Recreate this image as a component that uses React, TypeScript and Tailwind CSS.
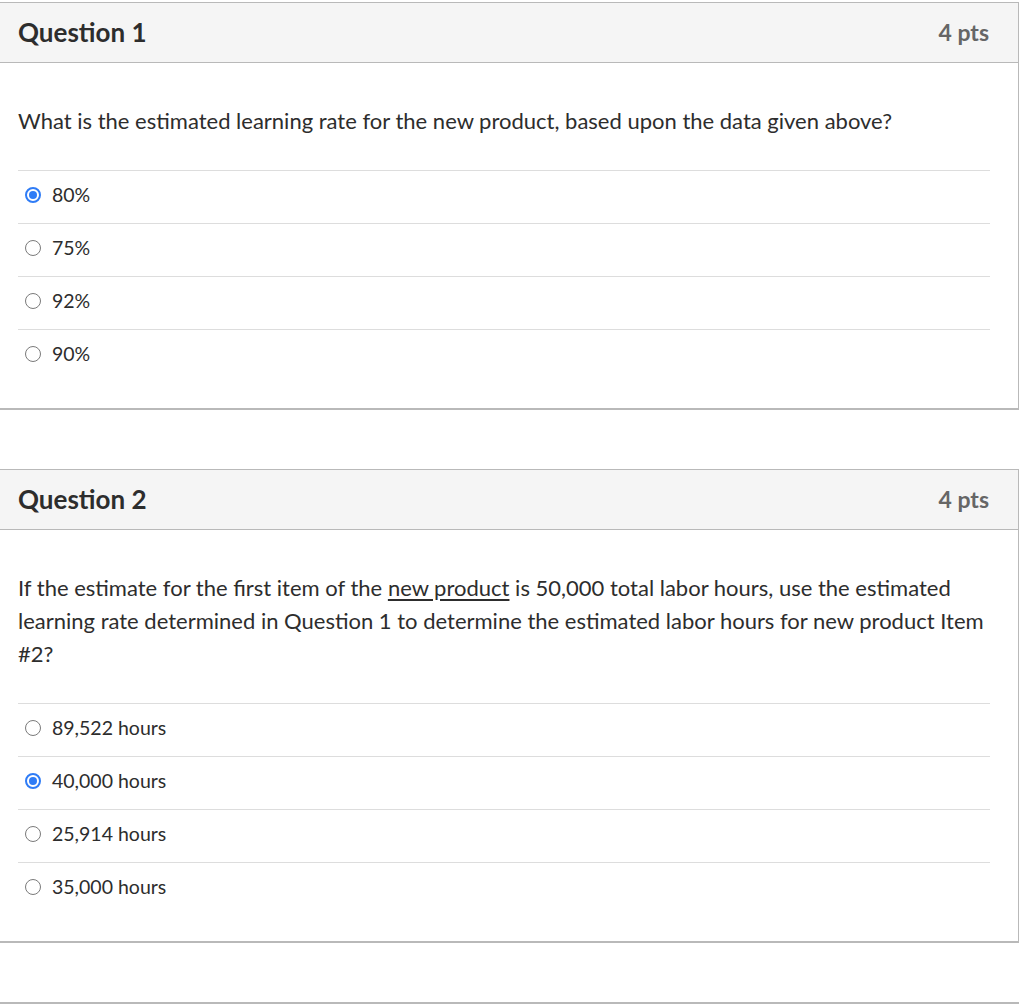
import React from 'react';

type Answer = { label: string; checked?: boolean };

function Radio({ checked }: { checked?: boolean }) {
  if (checked) {
    return (
      <span className="flex h-[16px] w-[16px] items-center justify-center rounded-full border-[2px] border-[#2f7cf6] bg-white">
        <span className="h-[8px] w-[8px] rounded-full bg-[#2f7cf6]" />
      </span>
    );
  }
  return <span className="h-[16px] w-[16px] rounded-full border border-[#7a7a7a] bg-white" />;
}

function QuestionCard({
  title,
  points,
  children,
  answers,
}: {
  title: string;
  points: string;
  children: React.ReactNode;
  answers: Answer[];
}) {
  return (
    <div className="w-[1019px] border border-l-0 border-[#b9b9b9] border-b-2 bg-white">
      <div className="flex h-[60px] items-center justify-between border-b border-[#b9b9b9] bg-[#f5f5f5] pl-[18px] pr-[29px]">
        <h2 className="text-[26px] font-bold text-[#2d2d2d]">{title}</h2>
        <span className="text-[23px] font-bold text-[#666666]">{points}</span>
      </div>
      <div className="pl-[18px] pr-[28px] pt-[41px] pb-[26px]">
        <div className="text-[22px] leading-[33px] text-[#2d2d2d]">{children}</div>
        <div className="mt-[33px]">
          {answers.map((a) => (
            <div key={a.label} className="flex h-[53px] items-center border-t border-[#dddddd] pb-[4px] pl-[7px]">
              <span className="flex w-[27px] items-center">
                <Radio checked={a.checked} />
              </span>
              <span className="text-[19.5px] text-[#2d2d2d]">{a.label}</span>
            </div>
          ))}
        </div>
      </div>
    </div>
  );
}

export default function App() {
  return (
    <div className="min-h-screen bg-white pt-[2px]" style={{ fontFamily: 'Lato, "Open Sans", sans-serif' }}>
      <div className="flex flex-col gap-[59px]">
        <QuestionCard
          title="Question 1"
          points="4 pts"
          answers={[{ label: '80%', checked: true }, { label: '75%' }, { label: '92%' }, { label: '90%' }]}
        >
          What is the estimated learning rate for the new product, based upon the data given above?
        </QuestionCard>

        <QuestionCard
          title="Question 2"
          points="4 pts"
          answers={[
            { label: '89,522 hours' },
            { label: '40,000 hours', checked: true },
            { label: '25,914 hours' },
            { label: '35,000 hours' },
          ]}
        >
          If the estimate for the first item of the <span className="underline underline-offset-[3px]">new product</span> is 50,000 total labor hours, use the estimated
          <br />
          learning rate determined in Question 1 to determine the estimated labor hours for new product Item
          <br />
          #2?
        </QuestionCard>

        <div className="h-[40px] w-[1019px] border-t-2 border-r border-[#b9b9b9]" />
      </div>
    </div>
  );
}
